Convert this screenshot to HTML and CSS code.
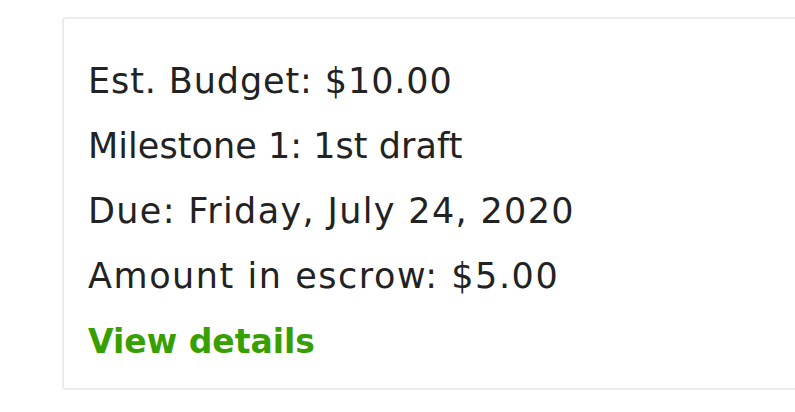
FILE: index.html
```html
<!DOCTYPE html>
<html lang="en">
<head>
<meta charset="utf-8">
<link rel="stylesheet" href="styles.css">
</head>
<body>
<div class="card">
  <p class="line line-budget">Est. Budget: $10.00</p>
  <p class="line line-milestone">Milestone 1: 1st draft</p>
  <p class="line line-due">Due: Friday, July 24, 2020</p>
  <p class="line line-escrow">Amount in escrow: $5.00</p>
  <a class="link" href="#">View details</a>
</div>
</body>
</html>
```
FILE: styles.css
```css
html, body {
  margin: 0;
  padding: 0;
  background: #ffffff;
  overflow: hidden;
}
body {
  width: 795px;
  height: 412px;
  font-family: "DejaVu Sans", "Liberation Sans", sans-serif;
}
.card {
  margin: 17px 0 0 62px;
  width: 733px;
  border: 2px solid #ececec;
  border-right: none;
  border-radius: 4px 0 0 4px;
  padding: 30px 24px 14px 24px;
  box-sizing: border-box;
  display: flex;
  flex-direction: column;
  align-items: flex-start;
}
.line {
  margin: 0;
  font-size: 35px;
  line-height: 65px;
  color: #222222;
  letter-spacing: 1.1px;
}
.line-budget {
  letter-spacing: 0.9px;
}
.line-milestone {
  letter-spacing: 0.05px;
}
.line-due {
  letter-spacing: 1.35px;
}
.line-escrow {
  letter-spacing: 1.55px;
}
.link {
  font-size: 33px;
  line-height: 65px;
  color: #37a000;
  font-weight: 700;
  text-decoration: none;
}
```
